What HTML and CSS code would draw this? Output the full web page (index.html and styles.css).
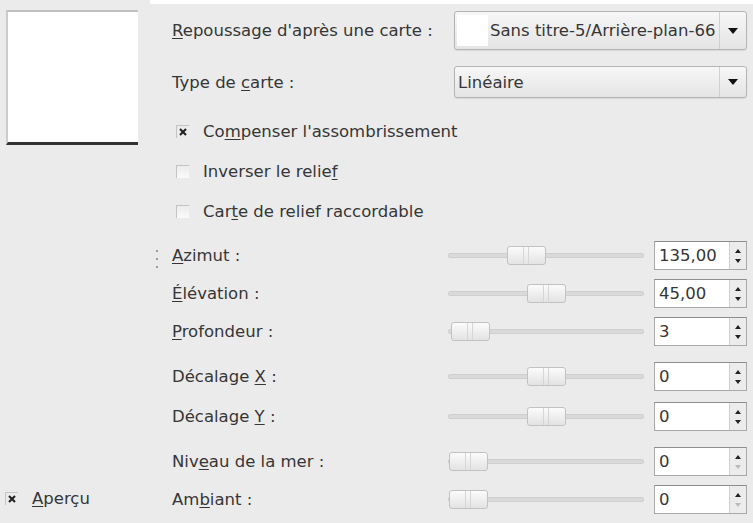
FILE: index.html
```html
<!DOCTYPE html>
<html>
<head>
    <title>Repoussage</title>
    <link rel="stylesheet" href="styles.css">
</head>
<body>
<div class="dialog">
    <!-- Preview column -->
    <div class="preview-col">
        <div class="preview"></div>
        <label class="check preview-check">
            <span class="box checked"><svg viewBox="0 0 12 12"><path d="M3 3L9 9M9 3L3 9"/></svg></span>
            <span><u>A</u>perçu</span>
        </label>
    </div>

    <!-- Options column -->
    <div class="options">
        <div class="row combo-row first">
            <span class="label"><u>R</u>epoussage d'après une carte :</span>
            <div class="combo tall">
                <span class="swatch"></span>
                <span class="combo-text">Sans titre-5/Arrière-plan-66</span>
                <span class="combo-arrow"></span>
            </div>
        </div>
        <div class="row combo-row">
            <span class="label">Type de <u>c</u>arte :</span>
            <div class="combo">
                <span class="combo-text plain">Linéaire</span>
                <span class="combo-arrow"></span>
            </div>
        </div>

        <div class="checks">
            <label class="check"><span class="box checked"><svg viewBox="0 0 12 12"><path d="M3 3L9 9M9 3L3 9"/></svg></span><span>Co<u>m</u>penser l'assombrissement</span></label>
            <label class="check"><span class="box"></span><span>Inverser le relie<u>f</u></span></label>
            <label class="check"><span class="box"></span><span>Car<u>t</u>e de relief raccordable</span></label>
        </div>

        <div class="group first-group">
            <span class="grip"></span>
            <div class="row slider-row">
                <span class="label"><u>A</u>zimut :</span>
                <div class="track"><span class="thumb" style="left: 58px"></span></div>
                <div class="spin"><span class="spin-value">135,00</span><span class="spin-btns"><i class="up"></i><i class="down"></i></span></div>
            </div>
            <div class="row slider-row">
                <span class="label"><u>É</u>lévation :</span>
                <div class="track"><span class="thumb" style="left: 78px"></span></div>
                <div class="spin"><span class="spin-value">45,00</span><span class="spin-btns"><i class="up"></i><i class="down"></i></span></div>
            </div>
            <div class="row slider-row">
                <span class="label"><u>P</u>rofondeur :</span>
                <div class="track"><span class="thumb" style="left: 2px"></span></div>
                <div class="spin"><span class="spin-value">3</span><span class="spin-btns"><i class="up"></i><i class="down"></i></span></div>
            </div>
        </div>

        <div class="group">
            <div class="row slider-row">
                <span class="label">Décalage <u>X</u> :</span>
                <div class="track"><span class="thumb" style="left: 78px"></span></div>
                <div class="spin"><span class="spin-value">0</span><span class="spin-btns"><i class="up"></i><i class="down"></i></span></div>
            </div>
            <div class="row slider-row">
                <span class="label">Décalage <u>Y</u> :</span>
                <div class="track"><span class="thumb" style="left: 78px"></span></div>
                <div class="spin"><span class="spin-value">0</span><span class="spin-btns"><i class="up"></i><i class="down"></i></span></div>
            </div>
        </div>

        <div class="group">
            <div class="row slider-row">
                <span class="label">Niv<u>e</u>au de la mer :</span>
                <div class="track"><span class="thumb" style="left: 0px"></span></div>
                <div class="spin"><span class="spin-value">0</span><span class="spin-btns"><i class="up"></i><i class="down off"></i></span></div>
            </div>
            <div class="row slider-row">
                <span class="label">Am<u>b</u>iant :</span>
                <div class="track"><span class="thumb" style="left: 0px"></span></div>
                <div class="spin"><span class="spin-value">0</span><span class="spin-btns"><i class="up"></i><i class="down off"></i></span></div>
            </div>
        </div>
    </div>
</div>
</body>
</html>
```

FILE: styles.css
```css
body {
    margin: 0;
    background-color: #ebebeb;
    font-family: "DejaVu Sans", Verdana, sans-serif;
    font-size: 16.5px;
    color: #363636;
}

u {
    text-decoration-thickness: 1px;
    text-underline-offset: 2px;
}

.dialog {
    display: flex;
    height: 523px;
}

/* preview column */
.preview-col {
    width: 150px;
    display: flex;
    flex-direction: column;
}

.preview {
    margin: 10px 0 0 6px;
    width: 130px;
    height: 130px;
    background-color: #fff;
    border-top: 2px solid #c0c0c0;
    border-left: 2px solid #cccccc;
    border-bottom: 3px solid #333;
}

.preview-check {
    margin-top: auto;
    margin-bottom: 12px;
    padding-left: 5px;
}

/* options column */
.options {
    flex: 1;
    padding-left: 22px;
    padding-right: 6px;
    border-top: 4px solid #fff;
}

.row {
    display: flex;
    align-items: center;
}

.label {
    flex: 1;
    white-space: nowrap;
}

.combo-row.first {
    margin-top: 7px;
}

.combo-row + .combo-row {
    margin-top: 16px;
}

.combo {
    width: 291px;
    height: 30px;
    display: flex;
    align-items: center;
    border: 1px solid #b4b4b4;
    border-radius: 3px;
    background: linear-gradient(#f7f7f7, #e4e4e4);
    box-shadow: 0 1px 1px rgba(0, 0, 0, 0.08);
}

.combo.tall {
    height: 37px;
}

.swatch {
    width: 31px;
    height: 31px;
    margin-left: 2px;
    background-color: #fff;
}

.combo-text {
    flex: 1;
    padding-left: 2px;
    white-space: nowrap;
    overflow: hidden;
}

.combo-text.plain {
    padding-left: 3px;
}

.combo-arrow {
    flex: none;
    width: 26px;
    height: 100%;
    border-left: 1px solid #d0d0d0;
    position: relative;
}

.combo-arrow::after {
    content: "";
    position: absolute;
    left: 8px;
    top: 50%;
    margin-top: -3px;
    border-left: 5px solid transparent;
    border-right: 5px solid transparent;
    border-top: 6px solid #111;
}

/* check buttons */
.checks {
    margin-top: 20px;
    display: flex;
    flex-direction: column;
    gap: 14px;
    padding-left: 4px;
}

.check {
    display: flex;
    align-items: center;
    gap: 14px;
    height: 26px;
}

.box {
    flex: none;
    width: 12px;
    height: 12px;
    border-top: 1px solid #c4c4c4;
    border-left: 1px solid #c4c4c4;
    background: linear-gradient(#ececec, #fafafa);
}

.box.checked {
    background: transparent;
}

.box svg {
    display: block;
    width: 12px;
    height: 12px;
}

.box path {
    stroke: #1e1e1e;
    stroke-width: 2;
}

/* sliders */
.group {
    position: relative;
    display: flex;
    flex-direction: column;
    gap: 9px;
    margin-top: 16px;
}

.group.first-group {
    margin-top: 17px;
}

.group + .group {
    gap: 11px;
}

.group:last-child {
    gap: 9px;
}

.grip {
    position: absolute;
    left: -16px;
    top: 6px;
    width: 2px;
    height: 22px;
    background: radial-gradient(circle, #9a9a9a 0.8px, transparent 1.2px) 0 0 / 2px 8px repeat-y;
}

.slider-row {
    height: 29px;
}

.track {
    position: relative;
    width: 194px;
    height: 3px;
    margin-right: 10px;
    border: 1px solid #cfcfcf;
    border-radius: 2px;
    background-color: #dadada;
}

.thumb {
    position: absolute;
    top: -8px;
    width: 37px;
    height: 17px;
    border: 1px solid #c2c2c2;
    border-radius: 3px;
    background:
        linear-gradient(90deg, transparent 15px, #d6d6d6 15px, #d6d6d6 16px, transparent 16px, transparent 20px, #d6d6d6 20px, #d6d6d6 21px, transparent 21px),
        linear-gradient(#fbfbfb, #e3e3e3);
}

.spin {
    width: 91px;
    height: 27px;
    display: flex;
    border: 1px solid #a8a8a8;
    border-top-color: #8e8e8e;
    background-color: #fff;
}

.spin-value {
    flex: 1;
    padding-left: 4px;
    line-height: 27px;
}

.spin-btns {
    width: 16px;
    display: flex;
    flex-direction: column;
    border-left: 1px solid #d0d0d0;
    background-color: #ececec;
}

.spin-btns i {
    flex: 1;
    position: relative;
}

.spin-btns i::after {
    content: "";
    position: absolute;
    left: 5px;
    border-left: 3px solid transparent;
    border-right: 3px solid transparent;
}

.spin-btns .up::after {
    bottom: 3px;
    border-bottom: 4px solid #222;
}

.spin-btns .down::after {
    top: 3px;
    border-top: 4px solid #222;
}

.spin-btns .down.off::after {
    border-top-color: #bbb;
}
```
